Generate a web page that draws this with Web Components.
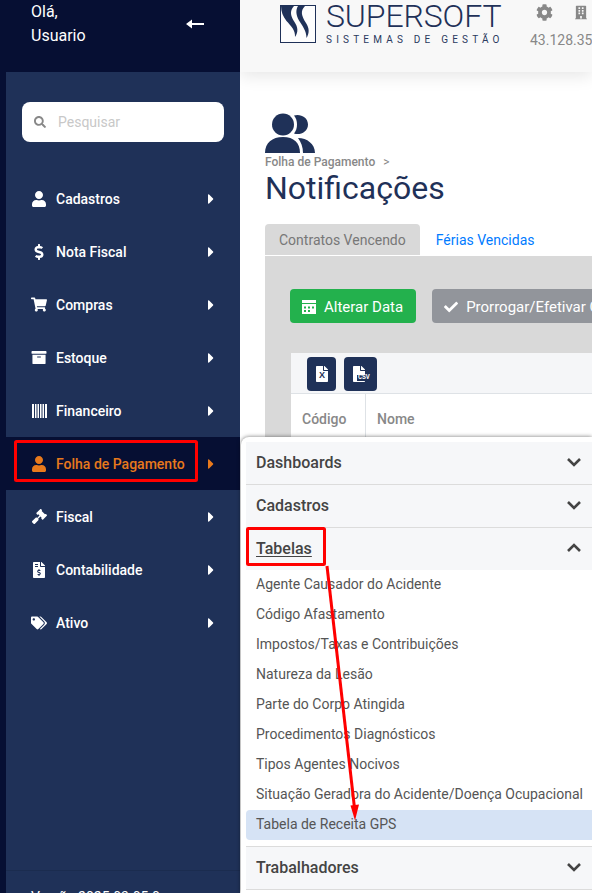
<!DOCTYPE html>
<html lang="pt-BR">
<head>
<meta charset="utf-8">
<title>Notificações</title>
<style>
  html, body { margin: 0; height: 100%; overflow: hidden; background: #fff; }
  body { font-family: Roboto, "Liberation Sans", sans-serif; }
</style>
</head>
<body>
<app-shell>
  <side-bar slot="side">
    <nav-item icon="user">Cadastros</nav-item>
    <nav-item icon="dollar">Nota Fiscal</nav-item>
    <nav-item icon="cart">Compras</nav-item>
    <nav-item icon="archive">Estoque</nav-item>
    <nav-item icon="barcode">Financeiro</nav-item>
    <nav-item icon="user" active>Folha de Pagamento</nav-item>
    <nav-item icon="gavel">Fiscal</nav-item>
    <nav-item icon="invoice">Contabilidade</nav-item>
    <nav-item icon="tags">Ativo</nav-item>
  </side-bar>
  <top-bar slot="top"></top-bar>
  <notif-page slot="main"></notif-page>
  <fly-out slot="over">
    <acc-section title="Dashboards"></acc-section>
    <acc-section title="Cadastros"></acc-section>
    <acc-section title="Tabelas" open>
      <acc-link>Agente Causador do Acidente</acc-link>
      <acc-link>Código Afastamento</acc-link>
      <acc-link>Impostos/Taxas e Contribuições</acc-link>
      <acc-link>Natureza da Lesão</acc-link>
      <acc-link>Parte do Corpo Atingida</acc-link>
      <acc-link>Procedimentos Diagnósticos</acc-link>
      <acc-link>Tipos Agentes Nocivos</acc-link>
      <acc-link>Situação Geradora do Acidente/Doença Ocupacional</acc-link>
      <acc-link selected>Tabela de Receita GPS</acc-link>
    </acc-section>
    <acc-section title="Trabalhadores"></acc-section>
  </fly-out>
  <red-marks slot="over"></red-marks>
</app-shell>

<script>
const ICONS = {
  user: ["0 0 448 512", "M224 256c70.7 0 128-57.3 128-128S294.7 0 224 0 96 57.3 96 128s57.3 128 128 128zm89.6 32h-16.7c-22.2 10.2-46.9 16-72.9 16s-50.6-5.8-72.9-16h-16.7C60.2 288 0 348.2 0 422.4V464c0 26.5 21.5 48 48 48h352c26.5 0 48-21.5 48-48v-41.6c0-74.2-60.2-134.4-134.4-134.4z"],
  dollar: ["0 0 288 512", "M209.2 233.4l-108-31.6C88.7 198.2 80 186.5 80 173.5c0-16.3 13.2-29.5 29.5-29.5h66.3c12.2 0 24.2 3.7 34.2 10.5 6.1 4.1 14.3 3.1 19.5-2l34.8-34c7.1-6.9 6.1-18.4-1.8-24.5C238 74.8 207.4 64.1 176 64V16c0-8.8-7.2-16-16-16h-32c-8.8 0-16 7.2-16 16v48h-2.5C45.8 64-5.4 118.7.5 183.6c4.2 46.1 39.4 83.6 83.8 96.6l102.5 30c12.5 3.7 21.2 15.3 21.2 28.3 0 16.3-13.2 29.5-29.5 29.5h-66.3C100 368 88 364.3 78 357.5c-6.1-4.1-14.3-3.1-19.5 2l-34.8 34c-7.1 6.9-6.1 18.4 1.8 24.5 24.5 19.2 55.1 29.9 86.5 30v48c0 8.8 7.2 16 16 16h32c8.8 0 16-7.2 16-16v-48.2c46.6-.9 90.3-28.6 105.7-72.7 21.5-61.6-14.6-124.8-72.5-141.7z"],
  cart: ["0 0 576 512", "M528.12 301.319l47.273-208C578.806 78.301 567.391 64 551.99 64H159.208l-9.166-44.81C147.758 8.021 137.93 0 126.529 0H24C10.745 0 0 10.745 0 24v16c0 13.255 10.745 24 24 24h69.883l70.248 343.435C147.325 417.1 136 435.222 136 456c0 30.928 25.072 56 56 56s56-25.072 56-56c0-15.674-6.447-29.835-16.824-40h209.647C430.447 426.165 424 440.326 424 456c0 30.928 25.072 56 56 56s56-25.072 56-56c0-22.172-12.888-41.332-31.579-50.405l5.517-24.276c3.413-15.018-8.002-29.319-23.403-29.319H218.117l-6.545-32h293.145c11.206 0 20.92-7.754 23.403-18.681z"],
  archive: ["0 0 512 512", "M32 448c0 17.7 14.3 32 32 32h384c17.7 0 32-14.3 32-32V160H32v288zm160-212c0-6.6 5.4-12 12-12h104c6.6 0 12 5.4 12 12v8c0 6.6-5.4 12-12 12H204c-6.6 0-12-5.4-12-12v-8zM480 32H32C14.3 32 0 46.3 0 64v48c0 8.8 7.2 16 16 16h480c8.8 0 16-7.2 16-16V64c0-17.7-14.3-32-32-32z"],
  // wider bars than the stock glyph, it reads almost solid in the reference
  barcode: ["0 0 15 14", "M0 0h2v14H0zM3 0h1.500v14H3zM5.500 0h1.500v14H5.500zM8 0h1.500v14H8zM10.500 0h1.500v14h-1.500zM13 0h2v14h-2z"],
  gavel: ["0 0 512 512", "M504.971 199.362l-22.627-22.627c-9.373-9.373-24.569-9.373-33.941 0l-5.657 5.657L329.608 69.255l5.657-5.657c9.373-9.373 9.373-24.569 0-33.941L312.638 7.029c-9.373-9.373-24.569-9.373-33.941 0L154.246 131.48c-9.373 9.373-9.373 24.569 0 33.941l22.627 22.627c9.373 9.373 24.569 9.373 33.941 0l5.657-5.657 39.598 39.598-81.04 81.04-5.657-5.657c-12.497-12.497-32.758-12.497-45.255 0L9.373 412.118c-12.497 12.497-12.497 32.758 0 45.255l45.255 45.255c12.497 12.497 32.758 12.497 45.255 0l114.745-114.745c12.497-12.497 12.497-32.758 0-45.255l-5.657-5.657 81.04-81.04 39.598 39.598-5.657 5.657c-9.373 9.373-9.373 24.569 0 33.941l22.627 22.627c9.373 9.373 24.569 9.373 33.941 0l124.451-124.451c9.372-9.372 9.372-24.568 0-33.941z"],
  invoice: ["0 0 384 512", "M377 105L279.1 7c-4.5-4.5-10.6-7-17-7H256v128h128v-6.1c0-6.3-2.5-12.4-7-16.9zm-153 31V0H24C10.7 0 0 10.7 0 24v464c0 13.3 10.7 24 24 24h336c13.3 0 24-10.7 24-24V160H248c-13.2 0-24-10.8-24-24zM64 72c0-4.42 3.58-8 8-8h80c4.42 0 8 3.58 8 8v16c0 4.42-3.58 8-8 8H72c-4.42 0-8-3.58-8-8V72zm0 80v-16c0-4.42 3.58-8 8-8h80c4.42 0 8 3.58 8 8v16c0 4.42-3.58 8-8 8H72c-4.42 0-8-3.58-8-8zm144 263.88V440c0 4.42-3.58 8-8 8h-16c-4.42 0-8-3.58-8-8v-24.29c-11.29-.58-22.27-4.52-31.37-11.35-3.9-2.93-4.1-8.77-.57-12.14l11.75-11.21c2.77-2.64 6.89-2.76 10.13-.73 3.87 2.42 8.26 3.72 12.82 3.72h28.11c6.5 0 11.8-5.92 11.8-13.19 0-5.95-3.61-11.19-8.77-12.73l-45-13.5c-18.59-5.58-31.58-23.42-31.58-43.39 0-24.52 19.05-44.44 42.67-45.07V232c0-4.42 3.58-8 8-8h16c4.42 0 8 3.58 8 8v24.29c11.29.58 22.27 4.51 31.37 11.35 3.9 2.93 4.1 8.77.57 12.14l-11.75 11.21c-2.77 2.64-6.89 2.76-10.13.73-3.87-2.43-8.26-3.72-12.82-3.72h-28.11c-6.5 0-11.8 5.92-11.8 13.19 0 5.95 3.61 11.19 8.77 12.73l45 13.5c18.59 5.58 31.58 23.42 31.58 43.39 0 24.53-19.05 44.44-42.67 45.07z"],
  tags: ["0 0 640 512", "M497.941 225.941L286.059 14.059A48 48 0 0 0 252.118 0H48C21.49 0 0 21.49 0 48v204.118a48 48 0 0 0 14.059 33.941l211.882 211.882c18.744 18.745 49.136 18.746 67.882 0l204.118-204.118c18.745-18.745 18.745-49.137 0-67.882zM112 160c-26.51 0-48-21.49-48-48s21.49-48 48-48 48 21.49 48 48-21.49 48-48 48zm513.941 133.823L421.823 497.941c-18.745 18.745-49.137 18.745-67.882 0l-.36-.36L527.64 323.522c16.999-16.999 26.36-39.6 26.36-63.64s-9.362-46.641-26.36-63.64L331.397 0h48.721a48 48 0 0 1 33.941 14.059l211.882 211.882c18.745 18.745 18.745 49.137 0 67.882z"],
  caret: ["0 0 192 512", "M0 384.662V127.338c0-17.818 21.543-26.741 34.142-14.142l128.662 128.662c7.81 7.81 7.81 20.474 0 28.284L34.142 398.804C21.543 411.404 0 402.48 0 384.662z"],
  search: ["0 0 512 512", "M505 442.7L405.3 343c-4.5-4.5-10.6-7-17-7H372c27.6-35.3 44-79.7 44-128C416 93.1 322.9 0 208 0S0 93.1 0 208s93.1 208 208 208c48.3 0 92.7-16.4 128-44v16.3c0 6.4 2.5 12.5 7 17l99.7 99.7c9.4 9.4 24.6 9.4 33.9 0l28.3-28.3c9.4-9.4 9.4-24.6.1-34zM208 336c-70.7 0-128-57.2-128-128 0-70.7 57.2-128 128-128 70.7 0 128 57.2 128 128 0 70.7-57.2 128-128 128z"],
  cog: ["0 0 512 512", "M487.4 315.7l-42.6-24.6c4.3-23.2 4.3-47 0-70.2l42.6-24.6c4.9-2.8 7.1-8.6 5.5-14-11.1-35.6-30-67.8-54.7-94.6-3.8-4.1-10-5.1-14.8-2.3L380.8 110c-17.9-15.4-38.5-27.3-60.8-35.1V25.8c0-5.6-3.9-10.5-9.4-11.7-36.7-8.2-74.3-7.8-109.2 0-5.5 1.2-9.4 6.1-9.4 11.7V75c-22.2 7.9-42.8 19.8-60.8 35.1L88.7 85.5c-4.9-2.8-11-1.9-14.8 2.3-24.7 26.7-43.6 58.9-54.7 94.6-1.7 5.4.6 11.2 5.5 14L67.3 221c-4.3 23.2-4.3 47 0 70.2l-42.6 24.6c-4.9 2.8-7.1 8.6-5.5 14 11.1 35.6 30 67.8 54.7 94.6 3.8 4.1 10 5.1 14.8 2.3l42.6-24.6c17.9 15.4 38.5 27.3 60.8 35.1v49.2c0 5.6 3.9 10.5 9.4 11.7 36.7 8.2 74.3 7.8 109.2 0 5.5-1.2 9.4-6.1 9.4-11.7v-49.2c22.2-7.9 42.8-19.8 60.8-35.1l42.6 24.6c4.9 2.8 11 1.9 14.8-2.3 24.7-26.7 43.6-58.9 54.7-94.6 1.5-5.5-.7-11.3-5.6-14.1zM256 336c-44.1 0-80-35.9-80-80s35.9-80 80-80 80 35.9 80 80-35.9 80-80 80z"],
  building: ["0 0 448 512", "M436 480h-20V24c0-13.255-10.745-24-24-24H56C42.745 0 32 10.745 32 24v456H12c-6.627 0-12 5.373-12 12v20h448v-20c0-6.627-5.373-12-12-12zM128 76c0-6.627 5.373-12 12-12h40c6.627 0 12 5.373 12 12v40c0 6.627-5.373 12-12 12h-40c-6.627 0-12-5.373-12-12V76zm0 96c0-6.627 5.373-12 12-12h40c6.627 0 12 5.373 12 12v40c0 6.627-5.373 12-12 12h-40c-6.627 0-12-5.373-12-12v-40zm52 148h-40c-6.627 0-12-5.373-12-12v-40c0-6.627 5.373-12 12-12h40c6.627 0 12 5.373 12 12v40c0 6.627-5.373 12-12 12zm76 160h-64v-84c0-6.627 5.373-12 12-12h40c6.627 0 12 5.373 12 12v84zm64-172c0 6.627-5.373 12-12 12h-40c-6.627 0-12-5.373-12-12v-40c0-6.627 5.373-12 12-12h40c6.627 0 12 5.373 12 12v40zm0-96c0 6.627-5.373 12-12 12h-40c-6.627 0-12-5.373-12-12v-40c0-6.627 5.373-12 12-12h40c6.627 0 12 5.373 12 12v40zm0-96c0 6.627-5.373 12-12 12h-40c-6.627 0-12-5.373-12-12V76c0-6.627 5.373-12 12-12h40c6.627 0 12 5.373 12 12v40z"],
  check: ["0 0 512 512", "M173.898 439.404l-166.4-166.4c-9.997-9.997-9.997-26.206 0-36.204l36.203-36.204c9.997-9.998 26.207-9.998 36.204 0L192 312.69 432.095 72.596c9.997-9.997 26.207-9.997 36.204 0l36.203 36.204c9.997 9.997 9.997 26.206 0 36.204l-294.4 294.401c-9.998 9.997-26.207 9.997-36.204-.001z"],
  // the page's own table/calendar glyph: header bar, body with little cell holes
  grid: ["0 0 14 14", "M0 0h14v3H0zM0 4h14v10H0zM2 6.500v2h2v-2zm4 0v2h2v-2zm4 0v2h2v-2zM2 10v2h2v-2zm4 0v2h2v-2z"],
  filex: ["0 0 384 512", "M224 136V0H24C10.7 0 0 10.7 0 24v464c0 13.3 10.7 24 24 24h336c13.3 0 24-10.7 24-24V160H248c-13.2 0-24-10.8-24-24zm160-14.1v6.1H256V0h6.1c6.4 0 12.5 2.5 17 7l97.9 98c4.5 4.5 7 10.6 7 16.9z"]
};

class FaIcon extends HTMLElement {
  constructor() {
    super();
    this.attachShadow({ mode: "open" });
  }

  connectedCallback() {
    const [box, d] = ICONS[this.getAttribute("name")];
    const w = this.getAttribute("w") || 16;
    const h = this.getAttribute("h") || 16;

    this.shadowRoot.innerHTML = `
      <style>
        :host { display: inline-flex; width: ${w}px; height: ${h}px; line-height: 0; }
        svg { width: 100%; height: 100%; fill: currentColor; fill-rule: evenodd; }
      </style>
      <svg viewBox="${box}"><path d="${d}"/></svg>
    `;
  }
}
customElements.define("fa-icon", FaIcon);

class AppShell extends HTMLElement {
  constructor() {
    super();
    this.attachShadow({ mode: "open" });
    this.shadowRoot.innerHTML = `
      <style>
        :host {
          display: grid;
          grid-template-columns: 240px 1fr;
          grid-template-rows: 72px 1fr;
          height: 893px;
          overflow: hidden;
          position: relative;
        }
        ::slotted([slot="side"]) { grid-row: 1 / 3; }
      </style>
      <slot name="side"></slot>
      <slot name="top"></slot>
      <slot name="main"></slot>
      <slot name="over"></slot>
    `;
  }
}
customElements.define("app-shell", AppShell);

class SideBar extends HTMLElement {
  constructor() {
    super();
    this.attachShadow({ mode: "open" });
    this.shadowRoot.innerHTML = `
      <style>
        :host {
          display: flex;
          flex-direction: column;
          background: #060f33;
          color: #fff;
          z-index: 2;
          overflow: hidden;
        }
        .head {
          height: 72px;
          flex: none;
          display: flex;
          align-items: flex-start;
          justify-content: space-between;
          box-sizing: border-box;
          padding: 0 36px 0 31px;
          font-size: 16px;
          line-height: 24px;
        }
        .head svg { margin-top: 19px; width: 18px; height: 10px; fill: #fff; }
        .body {
          flex: 1;
          margin-left: 6px;
          background: #1f3158;
          display: flex;
          flex-direction: column;
          min-height: 0;
        }
        .search {
          margin: 30px 16px 30px;
          height: 40px;
          background: #fff;
          border-radius: 8px;
          display: flex;
          align-items: center;
          gap: 12px;
          padding-left: 12px;
          color: #c8c8c8;
          font-size: 14px;
        }
        .search fa-icon { color: #888; }
        .foot {
          margin-top: auto;
          height: 23px;
          box-sizing: border-box;
          border-top: 1px solid rgba(0, 0, 0, 0.1);
          padding: 18px 0 0 25px;
          font-size: 14px;
          line-height: 16px;
          white-space: nowrap;
        }
      </style>
      <div class="head">
        <div>Olá,<br>Usuario</div>
        <svg viewBox="0 0 18 10"><path d="M0 5 6 .5V4h12v2H6v3.500z"/></svg>
      </div>
      <div class="body">
        <div class="search"><fa-icon name="search" w="12" h="12"></fa-icon><span>Pesquisar</span></div>
        <slot></slot>
        <div class="foot">Versão 2025.03.05.0</div>
      </div>
    `;
  }
}
customElements.define("side-bar", SideBar);

class NavItem extends HTMLElement {
  constructor() {
    super();
    this.attachShadow({ mode: "open" });
  }

  connectedCallback() {
    const name = this.getAttribute("icon");
    const [w, h] = {
      user: [14, 16], dollar: [10, 16], cart: [16, 15], archive: [16, 15], barcode: [15, 14],
      gavel: [15, 15], invoice: [12, 16], tags: [16, 14]
    }[name];

    this.shadowRoot.innerHTML = `
      <style>
        :host {
          display: flex;
          align-items: center;
          height: 53px;
          flex: none;
          padding-left: 25px;
          color: #fff;
          font-size: 14px;
          font-weight: 500;
          white-space: nowrap;
        }
        :host([active]) { background: #060f33; color: #e8791c; }
        .ico { width: 16px; display: flex; justify-content: center; margin-right: 9px; }
        .label { flex: 1; }
        .caret { margin-right: 26px; }
      </style>
      <span class="ico"><fa-icon name="${name}" w="${w}" h="${h}"></fa-icon></span>
      <span class="label"><slot></slot></span>
      <fa-icon class="caret" name="caret" w="6" h="16"></fa-icon>
    `;
  }
}
customElements.define("nav-item", NavItem);

class TopBar extends HTMLElement {
  constructor() {
    super();
    this.attachShadow({ mode: "open" });
    this.shadowRoot.innerHTML = `
      <style>
        :host {
          display: flex;
          align-items: flex-start;
          background: #f8f8f8;
          box-shadow: 0 4px 16px rgba(0, 0, 0, 0.1);
          padding-left: 40px;
          overflow: hidden;
          position: relative;
          z-index: 1;
          white-space: nowrap;
        }
        .logo { margin: 5px 0 0 0; width: 36px; height: 38px; flex: none; }
        .brand { margin: 0 0 0 10px; color: #1f3158; width: 176px; flex: none; }
        .name { font-size: 32px; font-weight: 300; line-height: 33px; letter-spacing: -0.1px; }
        .tag { font-size: 10px; line-height: 12px; letter-spacing: 4.2px; color: #2a3a5e; margin-top: 1px; }
        .info { margin-left: 28px; color: #888; font-size: 14px; flex: none; }
        .icons { display: flex; height: 17px; margin: 4px 0 0 6px; gap: 22px; align-items: center; }
        .ip { margin-top: 11px; line-height: 16px; }
      </style>
      <svg class="logo" viewBox="0 0 36 38">
        <rect x="0.500" y="0.500" width="35" height="37" fill="#fdfdfd" stroke="#1f3158"/>
        <path fill="#1f3158" d="M1 1h13C9 6 11 12 14.500 17c3.500 5 4 10 .5 15 .5-7-4-11-8.500-16C3 11.500 1 6.500 1 1z"/>
        <path fill="#1f3158" d="M18 1h7c-5 5-3.500 10 1 17 3.500 5.500 3.500 10 .5 15 0-7-4-12-7.500-17.500C16 10 15.500 5 18 1z"/>
      </svg>
      <div class="brand">
        <div class="name">SUPERSOFT</div>
        <div class="tag">SISTEMAS DE GESTÃO</div>
      </div>
      <div class="info">
        <div class="icons">
          <fa-icon name="cog" w="17" h="17"></fa-icon>
          <fa-icon name="building" w="12" h="15"></fa-icon>
        </div>
        <div class="ip">43.128.35</div>
      </div>
    `;
  }
}
customElements.define("top-bar", TopBar);

class NotifPage extends HTMLElement {
  constructor() {
    super();
    this.attachShadow({ mode: "open" });
    this.shadowRoot.innerHTML = `
      <style>
        :host {
          display: flex;
          flex-direction: column;
          padding: 40px 0 0 25px;
          min-width: 0;
          overflow: hidden;
          white-space: nowrap;
        }
        .people { width: 50px; height: 41px; display: block; flex: none; }
        .crumb { font-size: 12px; font-weight: 500; color: #888; line-height: 16px; margin-top: 1px; }
        .crumb span { margin-left: 5px; font-weight: 400; }
        h1 { margin: 0; font-size: 32px; font-weight: 400; color: #1f3158; line-height: 37px; }
        .tabs { display: flex; margin-top: 17px; height: 31px; font-size: 14px; line-height: 33px; flex: none; }
        .tab { padding: 0 14px; background: #d9d9d9; color: #777; border-radius: 4px 4px 0 0; }
        .tab.link { background: none; color: #007bff; margin-left: 2px; }
        .panel {
          margin-top: 1px;
          flex: 1;
          background: #d9d9d9;
          padding: 33px 0 0 25px;
        }
        .actions { display: flex; gap: 16px; }
        .btn {
          display: flex;
          align-items: center;
          gap: 8px;
          height: 34px;
          flex: none;
          padding: 2px 13px 0 12px;
          box-sizing: border-box;
          border-radius: 4px;
          color: #fff;
          font-size: 15px;
        }
        .btn.green { background: #23b14d; }
        .btn.grey { background: #92959b; }
        .table { margin: 30px 0 0 1px; background: #fff; height: 200px; }
        .tools {
          height: 41px;
          box-sizing: border-box;
          background: #f5f6f8;
          border-bottom: 1px solid #dee2e6;
          display: flex;
          align-items: flex-start;
          gap: 8px;
          padding: 4px 0 0 16px;
        }
        .file {
          height: 34px;
          background: #1f3158;
          border-radius: 4px;
          display: flex;
          align-items: center;
          justify-content: center;
          color: #fff;
          position: relative;
        }
        .file.x { width: 29px; }
        .file.csv { width: 33px; justify-content: flex-start; padding-left: 9px; box-sizing: border-box; }
        .file b {
          position: absolute;
          font: 700 9px/9px "Liberation Sans", sans-serif;
          color: #1f3158;
          bottom: 11px;
          left: 12px;
        }
        .file.csv b {
          left: 13px;
          bottom: 10px;
          background: #1f3158;
          color: #fff;
          padding: 0 1px;
          font: 700 6.500px/6px "Liberation Mono", monospace;
        }
        .head { display: flex; height: 48px; font-size: 14px; font-weight: 500; color: #888; line-height: 50px; }
        .head div:first-child { width: 63px; padding-left: 11px; border-right: 1px solid #dee2e6; }
        .head div:last-child { padding-left: 11px; }
      </style>
      <svg class="people" viewBox="0 0 50 41">
        <circle cx="18" cy="12.500" r="11" fill="#1f3158"/>
        <path fill="#1f3158" d="M0 41C0 31 7 25 18 25s17 6 17 16z"/>
        <path fill="#1f3158" d="M29 3.500C35 1.500 43 5 43 12.500S35 23.500 29 21.500C33 17 33 8 29 3.500z"/>
        <path fill="#1f3158" d="M33 26c9 0 17 6 17 15H38c0-6-2-11-5-15z"/>
      </svg>
      <div class="crumb">Folha de Pagamento <span>&gt;</span></div>
      <h1>Notificações</h1>
      <div class="tabs">
        <div class="tab">Contratos Vencendo</div>
        <div class="tab link">Férias Vencidas</div>
      </div>
      <div class="panel">
        <div class="actions">
          <div class="btn green"><fa-icon name="grid" w="14" h="14"></fa-icon>Alterar Data</div>
          <div class="btn grey"><fa-icon name="check" w="14" h="14"></fa-icon>Prorrogar/Efetivar Contrato</div>
        </div>
        <div class="table">
          <div class="tools">
            <div class="file x"><fa-icon name="filex" w="12" h="16"></fa-icon><b>X</b></div>
            <div class="file csv"><fa-icon name="filex" w="12" h="16"></fa-icon><b>CSV</b></div>
          </div>
          <div class="head"><div>Código</div><div>Nome</div></div>
        </div>
      </div>
    `;
  }
}
customElements.define("notif-page", NotifPage);

class FlyOut extends HTMLElement {
  constructor() {
    super();
    this.attachShadow({ mode: "open" });
    this.shadowRoot.innerHTML = `
      <style>
        :host {
          position: absolute;
          left: 241px;
          right: 0;
          top: 437px;
          bottom: 0;
          z-index: 3;
          background: #fff;
          border-radius: 8px 0 0 0;
          box-shadow: 0 0 4px rgba(0, 0, 0, 0.55);
          padding: 5px 0 0 5px;
          overflow: hidden;
          box-sizing: border-box;
        }
      </style>
      <slot></slot>
    `;
  }
}
customElements.define("fly-out", FlyOut);

class AccSection extends HTMLElement {
  constructor() {
    super();
    this.attachShadow({ mode: "open" });
  }

  connectedCallback() {
    const open = this.hasAttribute("open");
    const chevron = open ? "M1 8 7 2 13 8" : "M1 2 7 8 13 2";

    this.shadowRoot.innerHTML = `
      <style>
        :host { display: block; border-bottom: 1px solid #dcdcdc; }
        .bar {
          height: 42px;
          box-sizing: border-box;
          padding: 0 11px 2px 10px;
          background: #f6f7f9;
          display: flex;
          align-items: center;
          justify-content: space-between;
          color: #444;
          font-size: 16px;
          font-weight: 500;
        }
        :host([open]) .name { text-decoration: underline; text-underline-offset: 2px; }
        svg { width: 14px; height: 10px; fill: none; stroke: #444; stroke-width: 2.600; }
        .list { display: ${open ? "block" : "none"}; padding-bottom: 6px; }
      </style>
      <div class="bar">
        <span class="name">${this.getAttribute("title")}</span>
        <svg viewBox="0 0 14 10"><path d="${chevron}"/></svg>
      </div>
      <div class="list"><slot></slot></div>
    `;
  }
}
customElements.define("acc-section", AccSection);

class AccLink extends HTMLElement {
  constructor() {
    super();
    this.attachShadow({ mode: "open" });
    this.shadowRoot.innerHTML = `
      <style>
        :host {
          display: block;
          height: 30px;
          line-height: 28px;
          padding-left: 10px;
          font-size: 14px;
          color: #555;
          white-space: nowrap;
          border-radius: 4px 0 0 4px;
        }
        :host([selected]) { background: #d6e3f5; }
      </style>
      <slot></slot>
    `;
  }
}
customElements.define("acc-link", AccLink);

class RedMarks extends HTMLElement {
  constructor() {
    super();
    this.attachShadow({ mode: "open" });
    this.shadowRoot.innerHTML = `
      <style>
        :host { position: absolute; inset: 0; z-index: 4; pointer-events: none; }
        svg { width: 100%; height: 100%; display: block; }
      </style>
      <svg viewBox="0 0 592 893" fill="none" stroke="#f00" stroke-width="3">
        <rect x="15.500" y="441.500" width="181" height="39" rx="1"/>
        <rect x="247.500" y="528.500" width="77" height="36" rx="1"/>
        <path d="M327 566 354.500 808"/>
        <path fill="#f00" stroke="none" d="M355 820.500 350.500 805.500 359 804.500z"/>
      </svg>
    `;
  }
}
customElements.define("red-marks", RedMarks);
</script>
</body>
</html>
